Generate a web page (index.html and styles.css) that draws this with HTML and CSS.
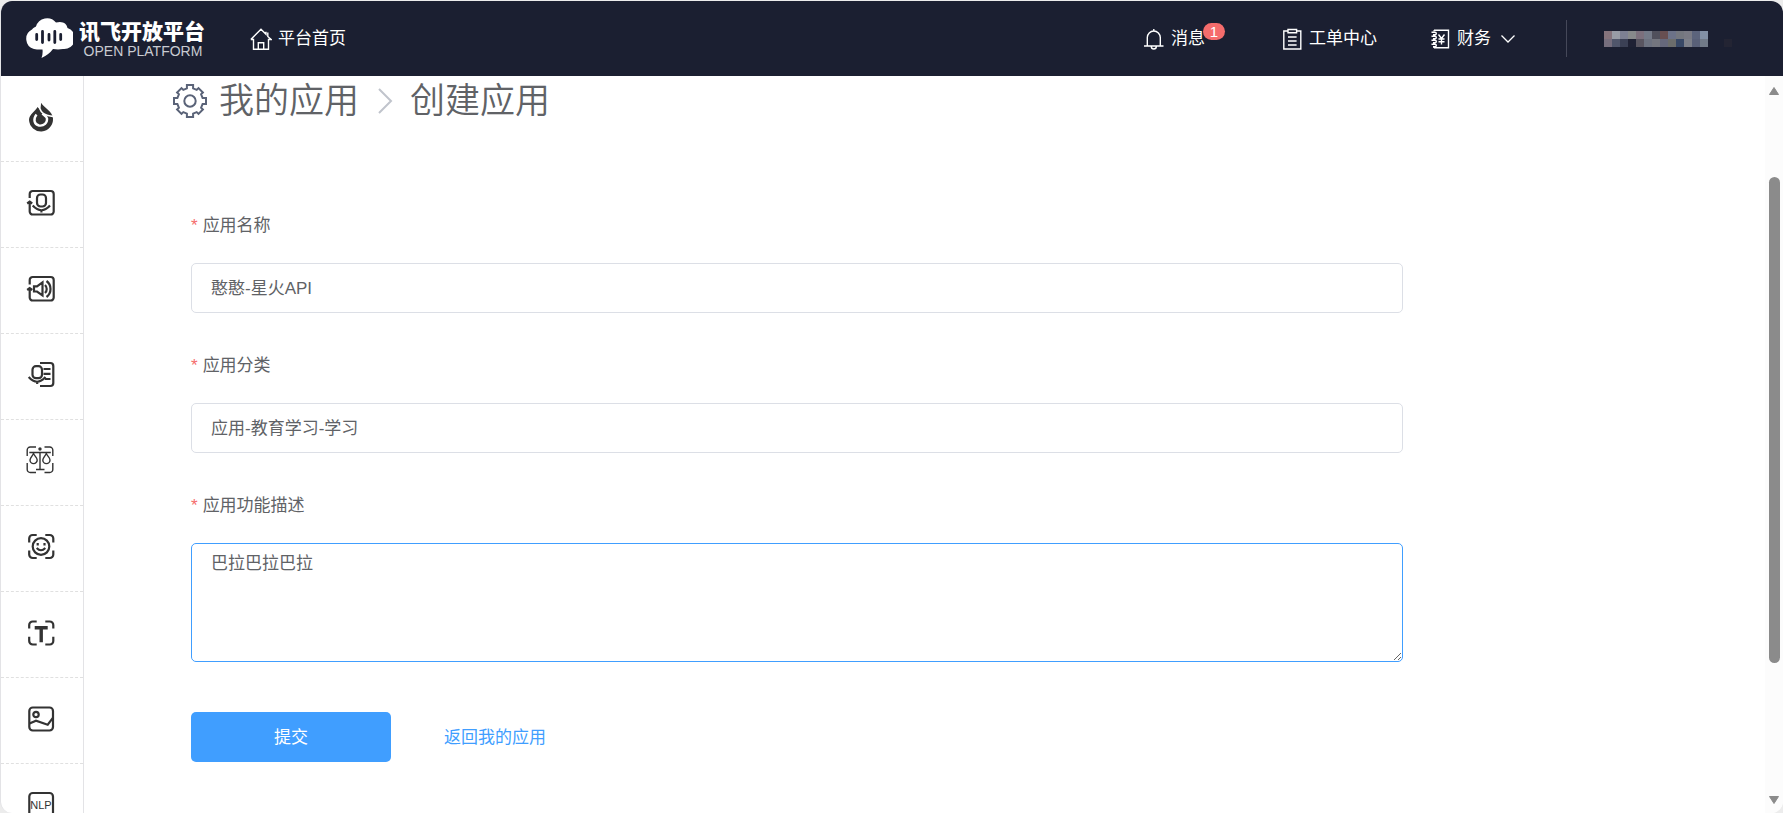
FILE: index.html
```html
<!DOCTYPE html>
<html lang="zh-CN">
<head>
<meta charset="utf-8">
<title>创建应用</title>
<link rel="stylesheet" href="styles.css">
</head>
<body>
<div class="window">
  <header class="header">
    <a class="brand" href="#">
      <svg class="brand-mark" viewBox="0 0 48 42" aria-hidden="true">
        <path fill="#fff" d="M9 31A10.5 10.5 0 0 1 7 11.5C8.500 9.500 10 9 11 8.500A11.500 11.500 0 0 1 31 4.500C38 2.500 42 6 42.500 10A10.800 10.800 0 0 1 38 31Q33 31.800 28 31Q24 36.500 16.500 40Q18 36 17.500 31.500Q13 31.800 9 31Z"/>
        <g stroke="#1b1f31" stroke-width="2.800" stroke-linecap="round"><path d="M11.700 16.500v5M17.500 13.500v11M24 16.500v5.500M29.800 13.500v11M35.700 16.500v5"/></g>
      </svg>
      <span class="brand-text"><strong class="brand-name">讯飞开放平台</strong><span class="brand-sub">OPEN PLATFORM</span></span>
    </a>
    <a class="nav-item" href="#">
      <svg class="nav-icon" viewBox="0 0 22 22" aria-hidden="true"><path d="M.800 11.500 11 1.200l5 5V3.800M17.800 4.500v4L21.200 11.500h-2.700v9.700h-15v-9.700H.800M8.300 21v-6.200h5.400V21"/></svg>
      <span>平台首页</span>
    </a>
    <nav class="nav">
      <a class="nav-item nav-message" href="#">
        <svg class="nav-icon" viewBox="0 0 22 22" aria-hidden="true"><path d="M10.800 1v2M4.300 18V9.500a6.500 6.500 0 0 1 13 0V18M1 18h19.500M8.300 18.500a2.500 2.500 0 0 0 5 0"/></svg>
        <span>消息</span>
        <span class="badge">1</span>
      </a>
      <a class="nav-item" href="#">
        <svg class="nav-icon" viewBox="0 0 22 22" aria-hidden="true"><path d="M6.500 3H2.800v18h17V3h-3.700M7 1.500h8.600v3.200H7zM7 9h8.600M7 13h8.600M7 17h8.600"/></svg>
        <span>工单中心</span>
      </a>
      <a class="nav-item" href="#">
        <svg class="nav-icon" viewBox="0 0 22 22" aria-hidden="true"><path d="M5 2.200h14.500v17.600H5M5 2.200v1M5 19v1M2.500 4.200h3.500a1.300 1.300 0 0 1 0 2.600H4M2.500 8.200h3.500a1.300 1.300 0 0 1 0 2.600H4M2.500 12.200h3.500a1.300 1.300 0 0 1 0 2.600H4M2.500 16.200h3.500a1.300 1.300 0 0 1 0 2.600H4M9.500 6.500l3 4 3-4M12.500 10.500v6M9.500 11h6M9.500 13.700h6"/></svg>
        <span>财务</span>
        <svg class="nav-caret" viewBox="0 0 16 10" aria-hidden="true"><path d="M1.500 1.500 8 8l6.500-6.500"/></svg>
      </a>
    </nav>
    <div class="user">
      <svg class="user-name" viewBox="0 0 16 2" shape-rendering="crispEdges" aria-hidden="true">
        <path fill="#85737c" d="M0 0h1v1H0z"/><path fill="#989ca6" d="M1 0h1v1H1z"/><path fill="#7d8093" d="M2 0h1v1H2z"/><path fill="#87898b" d="M3 0h1v1H3z"/><path fill="#7c707d" d="M4 0h1v1H4z"/><path fill="#747a88" d="M5 0h1v1H5z"/><path fill="#50505c" d="M6 0h1v1H6z"/><path fill="#684f52" d="M7 0h1v1H7z"/><path fill="#6c7288" d="M8 0h1v1H8z"/><path fill="#74777f" d="M9 0h1v1H9z"/><path fill="#797a84" d="M10 0h1v1h-1z"/><path fill="#5c647c" d="M11 0h1v1h-1z"/><path fill="#8290a5" d="M12 0h1v1h-1z"/>
        <path fill="#766e7d" d="M0 1h1v1H0z"/><path fill="#50566b" d="M1 1h1v1H1z"/><path fill="#3b4055" d="M2 1h1v1H2z"/><path fill="#1f2134" d="M3 1h1v1H3z"/><path fill="#595560" d="M4 1h1v1H4z"/><path fill="#6d7280" d="M5 1h1v1H5z"/><path fill="#74767f" d="M6 1h1v1H6z"/><path fill="#66687c" d="M7 1h1v1H7z"/><path fill="#6c6d6c" d="M8 1h1v1H8z"/><path fill="#384866" d="M9 1h1v1H9z"/><path fill="#7c7f89" d="M10 1h1v1h-1z"/><path fill="#596078" d="M11 1h1v1h-1z"/><path fill="#717a88" d="M12 1h1v1h-1z"/><path fill="#232433" d="M15 1h1v1h-1z"/>
      </svg>
    </div>
  </header>

  <div class="body">
    <aside class="sidebar">
      <a class="side-item" href="#" aria-label="星火大模型"><svg class="side-icon" viewBox="0 0 30 30"><path fill="#333" stroke="none" d="M14 .700C17.500 6 25.500 9.500 26 16.500A12 12.200 0 1 1 2 18C2 12.500 8.500 9 10.500 5C11.500 6 12 6.500 12.500 7.500C14 5 14 3 14 .700Z"/><path stroke="#fff" stroke-width="1.600" d="M12.200 3C12.500 9 15.500 12 20 13.300Q24 14.500 27 14.300"/><path stroke="#fff" stroke-width="2.400" d="M9.500 12.500C6 17 7 22.500 12 23.500C17 24.300 20.500 20.500 20 16.500C19.700 14.500 17 13.500 15.500 11.500"/></svg></a>
      <a class="side-item" href="#" aria-label="语音识别"><svg class="side-icon" viewBox="0 0 30 30"><path d="M2.700 10V6a3 3 0 0 1 3-3h18a3 3 0 0 1 3 3v17.500a3 3 0 0 1-3 3h-18a3 3 0 0 1-3-3V15M.200 15.500l2.500-1.800 2.500 1.800M5.700 17.500Q14.500 27 23 17.500M14.400 22v2.500"/><rect x="10" y="6.500" width="9" height="12" rx="3.500"/></svg></a>
      <a class="side-item" href="#" aria-label="语音合成"><svg class="side-icon" viewBox="0 0 30 30"><path d="M2.700 10.500V6a3 3 0 0 1 3-3h18a3 3 0 0 1 3 3v17.500a3 3 0 0 1-3 3h-18a3 3 0 0 1-3-3v-8M.200 16l2.500-1.800 2.500 1.800M7 12.300h3l5.500-4v13L10 17.500H7zM18 11a5.500 5.500 0 0 1 0 8M19.500 7a10 10 0 0 1 0 16"/></svg></a>
      <a class="side-item" href="#" aria-label="语音扩展"><svg class="side-icon" viewBox="0 0 30 30"><path d="M13 3h10.300a3 3 0 0 1 3 3v17a3 3 0 0 1-3 3H13M16.500 9h7M16.500 13.800h7M18 19h5.500M1.700 17Q10 26.500 18.500 17M10.200 21.500V24"/><rect x="5.500" y="6.200" width="9.500" height="12" rx="3.500"/></svg></a>
      <a class="side-item" href="#" aria-label="内容审核"><svg class="side-icon side-icon-thin" viewBox="0 0 30 30"><path d="M.200 10V4a3 3 0 0 1 3-3H9M17.500 1h5.300a3 3 0 0 1 3 3v6M25.800 17v6.500a3 3 0 0 1-3 3h-5.300M9 26.500H3.200a3 3 0 0 1-3-3V17M2.300 6.500h21.500M13 6v17.500M9 23.500h8.500M6.500 7.500C5.500 10 3 11.800 3 14a3.600 3.600 0 0 0 7.200 0C10.200 11.800 7.500 10 6.500 7.500zM19.300 7.500C18.300 10 15.800 11.800 15.800 14a3.600 3.600 0 0 0 7.200 0C23 11.800 20.300 10 19.300 7.500z"/><circle cx="13" cy="3" r="1" fill="#333"/></svg></a>
      <a class="side-item" href="#" aria-label="人脸识别"><svg class="side-icon" viewBox="0 0 30 30"><path d="M2.200 10.500V6.500a3.500 3.500 0 0 1 3.500-3.500h4M18.300 3h4.500A3.500 3.500 0 0 1 26.300 6.500v4M26.300 18.500v4a3.500 3.500 0 0 1-3.500 3.500h-4.500M9.700 26h-4A3.500 3.500 0 0 1 2.200 22.500v-4M9.700 16q4.300 4.500 8.600 0"/><circle cx="14" cy="14.500" r="8.300"/><path d="M10.700 11v2.600M17.500 11v2.600"/></svg></a>
      <a class="side-item" href="#" aria-label="文字识别"><svg class="side-icon" viewBox="0 0 30 30"><path d="M2.200 10.500V7a3.500 3.500 0 0 1 3.500-3.500h4M18.300 3.500h4.500A3.500 3.500 0 0 1 26.300 7v3.500M26.300 18.700v4.300a3.500 3.500 0 0 1-3.500 3.500h-4.500M9.700 26.500h-4A3.500 3.500 0 0 1 2.200 23v-4.300"/><path stroke-width="3.400" d="M7.700 9.700h13M14.200 9.700v14.500"/></svg></a>
      <a class="side-item" href="#" aria-label="图像识别"><svg class="side-icon" viewBox="0 0 30 30"><rect x="2.300" y="3.500" width="23.700" height="23" rx="3.500"/><circle cx="9" cy="10.500" r="2.700"/><path d="M2.500 19.500 9 16.700l11.700 4 5-6.500"/></svg></a>
      <a class="side-item" href="#" aria-label="自然语言处理"><svg class="side-icon" viewBox="0 0 30 30"><rect x="2.300" y="3" width="23.700" height="24" rx="3.500"/><text class="side-glyph" x="14" y="19" text-anchor="middle">NLP</text></svg></a>
    </aside>

    <main class="main">
      <h1 class="crumbs">
        <svg class="gear" viewBox="0 0 36 36" aria-hidden="true"><path d="M14.900 5.400V2h6.200v3.400L24.700 6.900 26.500 5.100 30.900 9.500 29.100 11.300 30.600 14.900H34v6.200h-3.400L29.100 24.700 30.900 26.500 26.500 30.900 24.700 29.100 21.100 30.600V34h-6.200v-3.400L11.300 29.100 9.500 30.900 5.100 26.500 6.900 24.700 5.400 21.100H2v-6.200h3.400L6.900 11.300 5.100 9.500 9.500 5.100 11.300 6.900z"/><circle cx="18" cy="18" r="5.700"/></svg>
        <span>我的应用</span>
        <svg class="crumb-sep" viewBox="0 0 16 28" aria-hidden="true"><path d="M2 2l12 12L2 26"/></svg>
        <span>创建应用</span>
      </h1>
      <form class="form">
        <div class="field">
          <label class="label" for="app-name">应用名称</label>
          <input class="control" id="app-name" type="text" value="憨憨-星火API">
        </div>
        <div class="field">
          <label class="label" for="app-type">应用分类</label>
          <input class="control" id="app-type" type="text" value="应用-教育学习-学习" readonly>
        </div>
        <div class="field">
          <label class="label" for="app-desc">应用功能描述</label>
          <textarea class="control control-area control-active" id="app-desc">巴拉巴拉巴拉</textarea>
        </div>
        <div class="actions">
          <button class="submit" type="button">提交</button>
          <a class="back" href="#">返回我的应用</a>
        </div>
      </form>
    </main>

    <div class="scroll" aria-hidden="true">
      <svg class="scroll-arrow" viewBox="0 0 12 10"><path d="M6 1.500 10.500 8.500h-9z"/></svg>
      <div class="scroll-track"><div class="scroll-thumb"></div></div>
      <svg class="scroll-arrow" viewBox="0 0 12 10"><path d="M6 8.500 1.500 1.500h9z"/></svg>
    </div>
  </div>
</div>
</body>
</html>
```

FILE: styles.css
```css
* {
  box-sizing: border-box;
}

body {
  margin: 0;
  padding: 1px 0 0;
  height: 100vh;
  overflow: hidden;
  background: #ececec;
  color: #606266;
  font-family: "Liberation Sans", "Noto Sans CJK SC", sans-serif;
  font-size: 17px;
}

a {
  color: inherit;
  text-decoration: none;
}

.window {
  display: flex;
  flex-direction: column;
  height: 100%;
  border-left: 1px solid #e3e3e6;
  border-radius: 12px;
  overflow: hidden;
  background: #fff;
}

/* Header */
.header {
  display: flex;
  align-items: center;
  flex: none;
  height: 75px;
  padding: 0 51px 0 24px;
  background: #1b1f31;
  color: #fff;
}

.brand {
  display: flex;
  align-items: center;
  gap: 6px;
  margin-right: 43px;
}

.brand-mark {
  width: 48px;
  height: 42px;
}

.brand-text {
  display: flex;
  flex-direction: column;
  width: 128px;
}

.brand-name {
  font-size: 21px;
  line-height: 24px;
  font-weight: 900;
}

.brand-sub {
  font-size: 14px;
  line-height: 14px;
  color: #c9cbd1;
  text-align: center;
}

.nav {
  display: flex;
  gap: 52px;
  margin-left: auto;
  margin-right: 50px;
}

.nav-item {
  display: flex;
  align-items: center;
  gap: 6px;
  line-height: 26px;
}

.nav-icon {
  width: 22px;
  height: 22px;
  fill: none;
  stroke: #fff;
  stroke-width: 1.4;
}

.nav-caret {
  width: 16px;
  height: 10px;
  margin-left: 3px;
  fill: none;
  stroke: #fff;
  stroke-width: 1.3;
}

.nav-message {
  position: relative;
  margin-right: 24px;
}

.badge {
  position: absolute;
  left: calc(100% - 2px);
  top: -3px;
  min-width: 22px;
  border-radius: 9px;
  background: #f56c6c;
  font-size: 15px;
  line-height: 17px;
  text-align: center;
}

.user {
  display: flex;
  align-items: center;
  height: 37px;
  padding-left: 37px;
  border-left: 1px solid #454859;
}

.user-name {
  width: 128px;
  height: 16px;
}

/* Body */
.body {
  display: flex;
  flex: 1;
  min-height: 0;
}

.sidebar {
  flex: none;
  width: 83px;
  border-right: 1px solid #e3e3e6;
  overflow: hidden;
}

.side-item {
  display: flex;
  justify-content: center;
  height: 86px;
  padding-top: 26px;
  border-bottom: 1px dashed #e0e0e0;
}

.side-icon {
  width: 30px;
  height: 30px;
  overflow: visible;
  fill: none;
  stroke: #333;
  stroke-width: 2.2;
}

.side-icon-thin {
  stroke-width: 1.4;
}

.side-glyph {
  fill: #333;
  stroke: none;
  font-size: 11px;
}

.main {
  flex: 1;
  min-width: 0;
  padding: 0 88px;
}

.crumbs {
  display: flex;
  align-items: center;
  margin: 0 0 76px;
  height: 49px;
  font-size: 35px;
  line-height: 50px;
  font-weight: 350;
}

.gear {
  width: 36px;
  height: 36px;
  margin-right: 11px;
  fill: none;
  stroke: #5a6378;
  stroke-width: 2;
}

.crumb-sep {
  width: 16px;
  height: 28px;
  margin: 0 17px 0 18px;
  fill: none;
  stroke: #c0c4cc;
  stroke-width: 2;
}

.form {
  display: flex;
  flex-direction: column;
  gap: 28px;
  max-width: 1231px;
  padding-left: 19px;
}

.field {
  display: flex;
  flex-direction: column;
  gap: 12px;
}

.label {
  line-height: 50px;
}

.label::before {
  content: "*";
  margin-right: 5px;
  color: #f56c6c;
}

.control {
  width: 100%;
  height: 50px;
  padding: 0 19px 3px;
  border: 1px solid #dcdfe6;
  border-radius: 5px;
  background: #fff;
  color: #606266;
  font: inherit;
  outline: none;
}

.control-area {
  display: block;
  height: 119px;
  padding: 7px 19px;
  line-height: 26px;
  resize: vertical;
}

.control-active {
  border-color: #409eff;
}

.actions {
  display: flex;
  align-items: center;
  gap: 53px;
  margin-top: 22px;
}

.submit {
  width: 200px;
  height: 50px;
  padding: 0 0 3px;
  border: 0;
  border-radius: 5px;
  background: #409eff;
  color: #fff;
  font: inherit;
}

.back {
  padding-bottom: 4px;
  color: #409eff;
}

/* Scroll rail */
.scroll {
  display: flex;
  flex-direction: column;
  align-items: center;
  flex: none;
  width: 18px;
  padding: 10px 0 8px;
  background: #fcfcfc;
}

.scroll-arrow {
  flex: none;
  width: 12px;
  height: 10px;
  fill: #8b8b8b;
  stroke: #8b8b8b;
  stroke-linejoin: round;
}

.scroll-track {
  flex: 1;
  width: 11px;
  padding: 81px 0 132px;
}

.scroll-thumb {
  height: 100%;
  border-radius: 6px;
  background: #8b8b8b;
}
```
